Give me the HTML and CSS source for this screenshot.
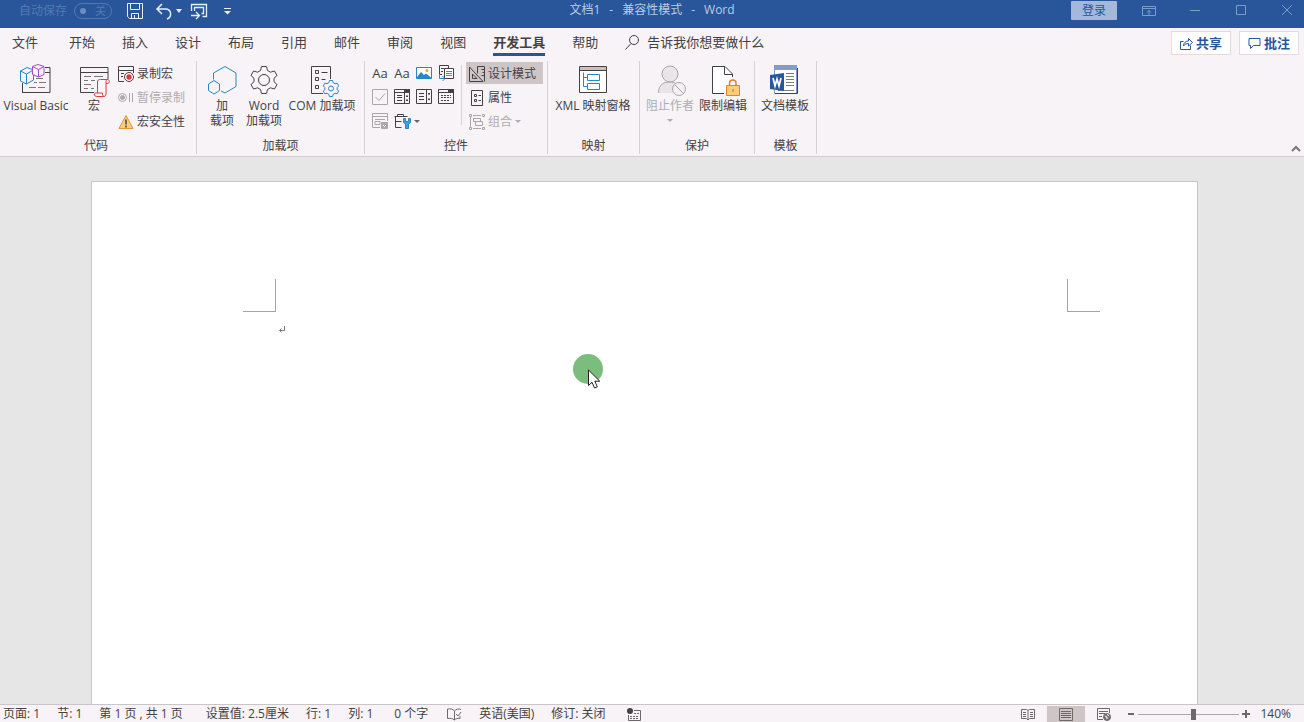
FILE: index.html
```html
<!DOCTYPE html>
<html lang="zh-CN">
<head>
<meta charset="utf-8">
<title>文档1 - 兼容性模式 - Word</title>
<link rel="stylesheet" href="styles.css">
</head>
<body>
<div class="app">
  <header class="titlebar">
    <div class="quick">
      <span class="autosave-label">自动保存</span>
      <button class="toggle" aria-label="自动保存"><i class="knob"></i><span>关</span></button>
      <button class="qbtn save" aria-label="保存"><svg width="18" height="18" viewBox="0 0 18 18"><path d="M1.500 1.500h15v15h-13l-2-2zM4.500 1.500v6h9v-6M5.500 16.500v-5h7v5M8.500 13v3.500"/></svg></button>
      <button class="qbtn undo" aria-label="撤消"><svg width="18" height="18" viewBox="0 0 18 18"><path d="M7 2L2 7l5 5M2 7h8.500c6 0 7 8 1.500 10" stroke-width="1.500"/></svg></button>
      <button class="qbtn drop" aria-label="撤消选项"><svg width="6" height="4" viewBox="0 0 6 4"><path d="M0 0h6L3 4z" class="fill"/></svg></button>
      <button class="qbtn touch" aria-label="切换窗口"><svg width="18" height="18" viewBox="0 0 18 18"><path d="M1.500 9V2.500h15v12h-4M4.500 9V5.500h9v6h-2M1 13.500h8M6 10l3.500 3.500L6 17" stroke-width="1.300"/></svg></button>
      <button class="qbtn more" aria-label="自定义快速访问工具栏"><svg width="7" height="8" viewBox="0 0 7 8"><path d="M0 1.500h7"/><path d="M0 4h7L3.500 7.500z" class="fill"/></svg></button>
    </div>
    <div class="doc-title"><span>文档1</span><span>-</span><span>兼容性模式</span><span>-</span><span>Word</span></div>
    <div class="window-controls">
      <button class="login">登录</button>
      <button class="win" aria-label="功能区显示选项"><svg width="14" height="12" viewBox="0 0 14 12"><path d="M.5 1.500h13v9H.5zM.5 3.500h13M7 10V5.500M5 7.500l2-2 2 2"/></svg></button>
      <button class="win" aria-label="最小化"><svg width="12" height="12" viewBox="0 0 12 12"><path d="M1 5.500h10"/></svg></button>
      <button class="win" aria-label="最大化"><svg width="12" height="12" viewBox="0 0 12 12"><path d="M1.500.5h9v9h-9z"/></svg></button>
      <button class="win" aria-label="关闭"><svg width="12" height="12" viewBox="0 0 12 12"><path d="M1 0l10 10M11 0L1 10"/></svg></button>
    </div>
  </header>

  <nav class="tabs">
    <button class="tab file">文件</button>
    <button class="tab">开始</button>
    <button class="tab">插入</button>
    <button class="tab">设计</button>
    <button class="tab">布局</button>
    <button class="tab">引用</button>
    <button class="tab">邮件</button>
    <button class="tab">审阅</button>
    <button class="tab">视图</button>
    <button class="tab active">开发工具</button>
    <button class="tab">帮助</button>
    <button class="tell"><svg width="15" height="16" viewBox="0 0 15 16"><circle cx="9" cy="6" r="4.500"/><path d="M6 9.500L.5 15.500"/></svg>告诉我你想要做什么</button>
    <div class="actions">
      <button class="action"><svg width="13" height="13" viewBox="0 0 13 13"><path d="M3.500 4.500h-3v8h10v-4M3.500 9c0-3 2-5 5-5V1.500l4 4-4 3.500V6.500c-2 0-3.500.5-5 2.500z"/></svg>共享</button>
      <button class="action"><svg width="13" height="13" viewBox="0 0 13 13"><path d="M1 1.500h11v7H5.500l-3 3v-3H1z"/></svg>批注</button>
    </div>
  </nav>

  <section class="ribbon">
    <div class="group code">
      <div class="tools">
        <button class="big vb"><svg class="ic" viewBox="0 0 34 34"><path d="M26 3.500h5v25H3.500V19M26 8.500h5M3 28.500h28"/><path d="M17 14.500h7M15 18.500h3M20 18.500h7M10 23.500h7M19 23.500h7" class="thin"/><path class="blue cube" d="M1.500 7L8 3.500 14.500 6v10L7.500 20 1.500 17zM1.500 7l6 3 7-4M7.500 10v10"/><path class="purple cube" d="M13.500 2.500L19 .5l6 2v8L19.500 13l-6-2.500zM13.500 2.500l6 3 5.500-3M19.500 5.500V13"/></svg><span>Visual Basic</span></button>
        <button class="big macro"><svg class="ic" viewBox="0 0 34 34"><path d="M31 15V3.500H3.500v25H17M3.500 8.500H31"/><path d="M7 12.500h7M17 12.500h9M7 16.500h4M14 16.500h4M7 20.500h7M7 24.500h4M14 24.500h3" class="thin"/><path class="red" fill="#fdf7f8" d="M20.500 29V18c0-2 1-2.500 3-2.500h7c2.500 0 2.500 4 0 4H29V30c0 1.500-1 2.500-2.500 2.500h-7c-2.500 0-2.500-3.500-1-3.500h7v1.500c0 1 1 2 2 2M29 19.500v-2c0-1 .5-2 1.500-2"/></svg><span>宏</span></button>
        <div class="stack">
          <button class="small"><svg width="16" height="16" viewBox="0 0 16 16"><path d="M6 15.500H.5V.5h15V7M.5 4.500h15M3 7.500h3M3 10.500h2"/><circle cx="11" cy="11" r="4.500" fill="#fff"/><circle cx="11" cy="11" r="2.700" fill="#e0393e" stroke="none"/></svg>录制宏</button>
          <button class="small" disabled><svg width="16" height="16" viewBox="0 0 16 16"><circle cx="4.500" cy="7.500" r="4"/><circle cx="4.500" cy="7.500" r="2" fill="#aaa"/><path d="M11.500 3v9M14.500 3v9"/></svg>暂停录制</button>
          <button class="small"><svg width="16" height="16" viewBox="0 0 16 16"><path d="M8 1.500L15 14.500H1z" fill="#fbcd7a" stroke="#e39339"/><path d="M8 5.500v5M8 11.500v2" stroke-width="1.500"/></svg>宏安全性</button>
        </div>
      </div>
      <div class="caption">代码</div>
    </div>

    <div class="group addins">
      <div class="tools">
        <button class="big a1"><svg class="ic blue" viewBox="0 0 34 34"><path d="M8.500 15.500V9L20 2.500 31 9v13.500L20 29l-4-2"/><path d="M9 16.500l5.500 3.500v6.500L9 30l-5.500-3.500V20z"/></svg><span>加<br>载项</span></button>
        <button class="big a2"><svg class="ic" viewBox="0 0 34 34"><path d="M14.500 2.500h5l1 4 3 1.700 4-1.200 2.500 4.500-3 2.800v3.400l3 2.800-2.500 4.500-4-1.200-3 1.700-1 4h-5l-1-4-3-1.700-4 1.200L4 20.500l3-2.800v-3.400l-3-2.800L6.500 7l4 1.200 3-1.700z"/><circle cx="17" cy="16" r="5.500"/></svg><span>Word<br>加载项</span></button>
        <button class="big a3"><svg class="ic" viewBox="0 0 34 34"><path d="M18 29.500H6.500v-27h19V15M10.500 6.500h3v3h-3zM10.500 13.500h3v3h-3zM10.500 21.500h3v3h-3zM16.500 8.500h6M16.500 15.500h4"/><g class="blue"><path fill="#f7f3f7" d="M24.500 16.500h3l.7 2.200 1.800 1 2.200-.5 1.500 2.700-1.500 1.600v2l1.500 1.600-1.500 2.700-2.200-.5-1.800 1-.7 2.200h-3l-.7-2.200-1.800-1-2.200.5-1.500-2.700 1.500-1.600v-2l-1.500-1.600 1.500-2.700 2.200.5 1.800-1z"/><circle cx="26" cy="24.500" r="2.500"/></g></svg><span>COM 加载项</span></button>
      </div>
      <div class="caption">加载项</div>
    </div>

    <div class="group controls">
      <div class="tools">
        <div class="cells">
          <button class="cell aa">Aa</button>
          <button class="cell aa">Aa</button>
          <button class="cell" aria-label="图片"><svg width="16" height="16" viewBox="0 0 16 16"><path d="M.5 2.500h15v11H.5z" fill="#fff" stroke="#2487c8"/><path d="M1 12l4-5 3 3 2-1.500 5 4V13H1z" fill="#2487c8" stroke="none"/><circle cx="11" cy="5.500" r="1.500" fill="#efa044" stroke="none"/></svg></button>
          <button class="cell" aria-label="构建基块"><svg width="16" height="16" viewBox="0 0 16 16"><path d="M4 9.500H1.500v-9h9V3M3 3.500h3M3 6.500h2"/><path d="M6.500 3.500h9v10h-9z" fill="#fff"/><path d="M8 6.500h6M8 8.500h6M8 10.500h6" stroke="#dc5558"/><path d="M1.500 9v4.500H6M4.500 11l2.500 2.500L4.500 16" class="blue"/></svg></button>
          <button class="cell gray" aria-label="复选框"><svg width="16" height="16" viewBox="0 0 16 16"><path d="M.5.5h15v15H.5zM3.500 8l3.500 3.500L13 4.500"/></svg></button>
          <button class="cell" aria-label="组合框"><svg width="16" height="16" viewBox="0 0 16 16"><path d="M.5.5h15v14H.5zM10.500 1v13M.5 3.500h15M3 6.500h5M3 8.500h5M3 11.500h5"/><path d="M10 0h6v4h-6zM12 6.500h2v1.500h-2zM12 10.500h2v1.500h-2z" class="dark"/></svg></button>
          <button class="cell" aria-label="下拉列表"><svg width="16" height="16" viewBox="0 0 16 16"><path d="M.5.5h15v14H.5zM10.500 1v13M3 4.500h5M3 7.500h5M3 10.500h5"/><path d="M12 4h2v1.500h-2zM12 9.500h2v1.500h-2z" class="dark"/></svg></button>
          <button class="cell" aria-label="日期选取器"><svg width="16" height="16" viewBox="0 0 16 16"><path d="M.5.5h15v14H.5zM.5 3.500h15"/><path d="M10 0h6v4h-6z" class="dark"/><path d="M3 6.500h10M3 8.500h10M3 11.500h8" stroke-dasharray="2 1"/></svg></button>
          <button class="cell gray" aria-label="重复分区"><svg width="16" height="16" viewBox="0 0 16 16"><path d="M8 14.500H.5V.5h15V8M.5 3.500h15M3 6.500h10M3 8.500h5v3H3z"/><path d="M9.500 9.500h6v6h-6z" fill="#aaa"/><path d="M11 12l1.500 1.500L14 12" stroke="#fff"/></svg></button>
          <button class="cell legacy" aria-label="旧式工具"><svg width="18" height="16" viewBox="0 0 18 16"><path d="M3.500 3.500v-2h6v2M.5 3.500h13M1.500 3.500v11h6M1.500 8.500h6"/><path d="M9.500 5.500v4l2 1.500v4.500h3V11l2-1.500v-4h-2v3h-3v-3z" fill="#40a0dc" class="blue"/></svg><i class="caret"></i></button>
        </div>
        <div class="subline"></div>
        <div class="stack modes">
          <button class="small selected"><svg width="16" height="16" viewBox="0 0 16 16"><path d="M.5 1v14.500H14zM3.500 8v4.500H8zM8.500 7.500v-7h7v15M12.500 3.500h3M13.500 6.500h2M12.500 9.500h3"/></svg>设计模式</button>
          <button class="small"><svg width="16" height="16" viewBox="0 0 16 16"><path d="M2.500.5h11v15h-11zM5.500 4.500h2v2h-2zM5.500 9.500h2v2h-2zM9.500 5.500H12M9.500 10.500H12"/></svg>属性</button>
          <button class="small" disabled><svg width="16" height="16" viewBox="0 0 16 16"><path d="M1.500 3v10M4 1.500h8M4 14.500h8M4.500 4.500h7v3h-7zM6.500 7.500h7v4h-7z"/><path d="M.5.5h2v2h-2zM.5 13.500h2v2h-2zM13.500.5h2v2h-2zM13.500 13.500h2v2h-2z"/></svg>组合<i class="caret"></i></button>
        </div>
      </div>
      <div class="caption">控件</div>
    </div>

    <div class="group mapping">
      <div class="tools">
        <button class="big"><svg class="ic" viewBox="0 0 34 34"><path d="M3.500 2.500h27v26h-27z" fill="#fff"/><path d="M4 3h26v3.500H4z" fill="#cbbfc0" stroke="none"/><path d="M3.500 6.500h27"/><path class="blue" d="M11.500 10.500h12v6h-12zM11.500 19.500h12v6h-12zM7.500 8.500v14h4M7.500 13.500h4"/></svg><span>XML 映射窗格</span></button>
      </div>
      <div class="caption">映射</div>
    </div>

    <div class="group protect">
      <div class="tools">
        <button class="big" disabled><svg class="ic" viewBox="0 0 34 34"><path fill="#e9e6e9" d="M5.500 29c0-12 14-14 19-8l-5 8z" stroke="none"/><circle cx="17" cy="10" r="8" fill="#e9e6e9"/><path d="M5.500 29c0-9 6-11 11-11 3 0 5 .5 7 2"/><circle cx="26" cy="25" r="6.500" fill="#f3f0f3"/><path d="M21.500 20.500l9 9"/></svg><span>阻止作者</span><i class="caret"></i></button>
        <button class="big restrict"><svg class="ic" viewBox="0 0 34 34"><path fill="#fff" d="M18 29.500H6.500v-27H19l7.500 7.500v19H18z" stroke="none"/><path d="M18 29.500H6.500v-27H19l7.500 7.500v3M18.500 2.500v8h8"/><path d="M23.500 22v-3c0-4 6.500-4 6.500 0v3" stroke="#df822b" fill="none" stroke-width="1.500"/><path d="M20.500 21.500h13v10h-13z" fill="#fdcd79" stroke="#df822b"/><path d="M27 25v3" stroke="#b56d24"/></svg><span>限制编辑</span></button>
      </div>
      <div class="caption">保护</div>
    </div>

    <div class="group template">
      <div class="tools">
        <button class="big"><svg class="ic" viewBox="0 0 34 34"><path d="M6.500 1.500h22v28h-22z" fill="#fff" stroke="#7b98c4"/><path d="M6 1h23v5H6z" fill="#7f9fc9" stroke="none"/><path d="M7 29.500h22.500V4"/><path d="M18 9.500h8M18 12.500h8M18 15.500h8M18 18.500h8M18 21.500h8M10 26.500h16" class="thin"/><path d="M2 11l14-2v18L2 25z" fill="#2a579a" stroke="none"/><path d="M5 14l2 8 2-7 2 7 2-8" stroke="#fff" stroke-width="1.700"/></svg><span>文档模板</span></button>
      </div>
      <div class="caption">模板</div>
    </div>
    <button class="collapse" aria-label="折叠功能区"><svg width="10" height="7" viewBox="0 0 10 7"><path d="M1 6l4-4 4 4"/></svg></button>
  </section>

  <main class="workspace">
    <article class="page">
      <div class="margins"><i class="corner left"></i><i class="corner right"></i></div>
      <p class="para"><svg width="8" height="8" viewBox="0 0 8 8"><path d="M6.500 0v4.500H2M3.500 2.500l-2 2 2 2"/></svg></p>
    </article>
    <div class="pointer"><svg width="32" height="36" viewBox="0 0 32 36"><circle cx="15" cy="15" r="15" fill="#7abd7c" stroke="none"/><path d="M15.500 16v15.500l3.500-3.200 2.500 5.700 2.800-1.200-2.500-5.600h5z" fill="#fff" stroke="#222"/></svg></div>
  </main>

  <footer class="status">
    <span>页面: 1</span><span>节: 1</span><span class="pages">第 1 页 , 共 1 页</span><span>设置值: 2.5厘米</span><span>行: 1</span><span>列: 1</span><span class="words">0 个字</span>
    <svg width="15" height="13" viewBox="0 0 15 13"><path d="M7.500 12V3C6 1 3 .5.500 1v9.500c3-.5 5 0 7 1.500 1.500-1.500 3-2 5.500-1.500V8M7.500 3C9 1 12 .5 14 1.500M9 6l2 2 3-4"/></svg>
    <span>英语(美国)</span><span>修订: 关闭</span>
    <svg class="rec" width="14" height="13" viewBox="0 0 14 13"><path d="M3 8.500h9M3 10.500h9M7 5.500h5" stroke-dasharray="2 1"/><path d="M7 2.500h6.500v10h-12V7"/><circle cx="3" cy="3" r="3" class="dark"/></svg>
    <div class="views">
      <button aria-label="阅读视图"><svg width="14" height="13" viewBox="0 0 14 13"><path d="M7 12L5.500 10.500h-5v-9h5L7 2.500l1.500-1h5v9h-5zM7 2.500V12M2 4.500h3M2 6.500h3M2 8.500h3M9 4.500h3M9 6.500h3M9 8.500h3"/></svg></button>
      <button class="on" aria-label="页面视图"><svg width="14" height="13" viewBox="0 0 14 13"><path d="M.5.5h13v12H.5zM2 3.500h10M2 5.500h10M2 7.500h10M2 9.500h10"/></svg></button>
      <button aria-label="Web 版式视图"><svg width="14" height="13" viewBox="0 0 14 13"><path d="M6 11.500H.5V.5h12V5M2 3.500h9M2 5.500h6M2 8.500h3"/><circle cx="10" cy="9" r="3.500" fill="#777"/><path d="M8 8l2 1v2M10 6l2 2" stroke="#fff"/></svg></button>
    </div>
    <div class="zoom">
      <button aria-label="缩小"><svg width="8" height="8" viewBox="0 0 8 8"><path d="M1 4h6" stroke-width="2"/></svg></button>
      <input type="range" min="0" max="100" value="55" aria-label="缩放">
      <button aria-label="放大"><svg width="8" height="8" viewBox="0 0 8 8"><path d="M0 4h8M4 0v8" stroke-width="2"/></svg></button>
      <span>140%</span>
    </div>
  </footer>
</div>
</body>
</html>
```
FILE: styles.css
```css
* { box-sizing: border-box; }
body {
  margin: 0;
  font: 12px/16px "Open Sans", "Noto Sans CJK SC", sans-serif;
  color: #444143;
}
button {
  font: inherit;
  color: inherit;
  background: none;
  border: 0;
  padding: 0;
  margin: 0;
  white-space: nowrap;
}
svg { display: block; flex: none; fill: none; stroke: #444143; }
.app { height: 100vh; display: flex; flex-direction: column; overflow: hidden; }

.titlebar {
  height: 28px;
  flex: none;
  display: grid;
  grid-template-columns: 1fr auto 1fr;
  align-items: start;
  padding-top: 1px;
  background: #29569b;
  color: #b9cbe4;
}
.titlebar svg { stroke: #e6f0fb; }
.titlebar .fill { fill: #e6f0fb; stroke: none; }
.quick { display: flex; align-items: center; height: 20px; padding-left: 19px; }
.autosave-label { color: #5379b1; margin-right: 7px; }
.toggle {
  display: flex;
  align-items: center;
  justify-content: space-between;
  width: 38px;
  height: 16px;
  padding: 0 5px;
  border: 1px solid #5379b1;
  border-radius: 8px;
  color: #5379b1;
  font-size: 11px;
}
.knob { width: 6px; height: 6px; border-radius: 3px; background: #6a8dc0; }
.save { margin-left: 14px; }
.undo { margin-left: 11px; }
.drop { margin-left: 3px; }
.touch { margin-left: 8px; }
.more { margin-left: 16px; }
.doc-title { display: flex; gap: 9px; line-height: 18px; }
.window-controls { display: flex; justify-content: flex-end; align-items: center; height: 19px; }
.login { width: 46px; height: 19px; margin-right: 9px; background: #a4b9da; color: #29569b; border-radius: 1px; }
.win { width: 46px; display: flex; justify-content: center; }
.win:last-child { width: 40px; padding-left: 6px; }
.win svg { stroke: #7d9cc9; }

.tabs {
  height: 30px;
  flex: none;
  display: flex;
  align-items: flex-start;
  gap: 27px;
  padding: 4px 5px 0 12px;
  background: #f7f3f7;
  font-size: 13px;
}
.tab { display: flex; height: 24px; line-height: 20px; }
.file { margin-right: 4px; }
.active { font-weight: bold; border-bottom: 3px solid #29569b; }
.tell { display: flex; align-items: center; gap: 7px; height: 20px; }
.actions { display: flex; gap: 8px; margin: -1px 0 0 auto; }
.action {
  display: flex;
  align-items: center;
  justify-content: center;
  gap: 3px;
  width: 60px;
  height: 24px;
  background: #fff;
  border: 1px solid #ead9dc;
  color: #29569b;
  font-weight: bold;
}
.action svg { stroke: #29569b; }

.ribbon {
  flex: none;
  display: flex;
  padding: 3px 0 2px;
  background: #f7f3f7;
  border-bottom: 1px solid #d1cdd1;
}
.group { display: flex; flex-direction: column; border-right: 1px solid #d5d1d5; }
.tools { display: flex; height: 77px; }
.caption { text-align: center; }
.big {
  display: flex;
  flex-direction: column;
  align-items: center;
  padding-top: 3px;
  line-height: 15px;
}
.ic { width: 34px; height: 34px; }
.thin { opacity: .7; }
.blue, .blue path, .blue circle { stroke: #2487c8; }
.purple { stroke: #a44cc0; }
.red { stroke: #e0393e; }
.cube { fill: #f7f3f7; }
.dark { fill: #444143; stroke: none; }
button:disabled { color: #b0adaf; }
button:disabled svg, .gray svg { stroke: #aaa6a9; }
.caret { width: 0; height: 0; border: 3px solid transparent; border-top-color: #666; border-bottom: 0; }
button:disabled .caret { border-top-color: #b0adaf; margin-top: 6px; }
.stack { display: flex; flex-direction: column; }
.small { display: flex; align-items: center; gap: 3px; height: 24px; padding: 1px 4px 0 3px; }
button.small:disabled .caret { margin-top: 0; }

.vb { width: 72px; }
.macro { width: 36px; margin: 0 3px 0 4px; }
.code .tools { padding-right: 7px; }
.code .caption { padding-right: 4px; }
.addins .tools { padding: 0 6px 0 5px; }
.a1 { width: 40px; }
.a2 { width: 44px; }
.a3 { width: 72px; }
.controls .tools { padding: 0 4px; }
.cells { display: grid; grid-template-columns: repeat(4, 22px); grid-auto-rows: 24px; }
.cell { display: flex; align-items: center; justify-content: center; }
.aa { font-size: 13px; }
.legacy { grid-column: span 2; justify-content: flex-start; gap: 2px; padding-left: 3px; }
.subline { width: 1px; height: 60px; margin: 4px 4px 0; background: #d5d1d5; }
.modes { width: 77px; }
.selected { background: #cec6c6; height: 22px; margin: 1px 0; }
.mapping .big { width: 80px; margin: 0 6px 0 5px; }
.protect .big { width: 52px; margin-left: 4px; }
.protect .restrict { width: 54px; margin: 0 4px 0 0; }
.template .big { width: 50px; margin: 0 6px 0 5px; }
.collapse { margin: auto 3px 2px auto; }
.collapse svg { stroke: #777; stroke-width: 2; }

.workspace {
  position: relative;
  flex: 1;
  min-height: 0;
  display: flex;
  padding: 24px 106px 0 91px;
  background: #e6e6e6;
}
.page { flex: 1; padding-top: 97px; background: #fff; border: 1px solid #c8c8c8; border-bottom: 0; }
.margins { display: flex; justify-content: space-between; padding: 0 97px 0 151px; }
.corner { width: 33px; height: 33px; border: 0 solid #a5a5a5; border-bottom-width: 1px; }
.left { border-right-width: 1px; }
.right { border-left-width: 1px; }
.para { margin: 14px 0 0 186px; }
.para svg { stroke: #777; }
.pointer { position: absolute; left: 573px; top: 197px; }

.status {
  flex: none;
  display: flex;
  align-items: center;
  gap: 17px;
  height: 18px;
  padding: 1px 0 0 3px;
  white-space: nowrap;
  background: #f7f3f7;
  border-top: 1px solid #c9c5c9;
}
.status svg { stroke: #6c696b; }
.pages { margin-right: 6px; }
.words { margin: 0 2px 0 4px; }
.rec { margin-left: 4px; }
.views { display: flex; margin-left: auto; align-self: stretch; }
.views button { width: 38px; display: flex; align-items: center; justify-content: center; }
.on { background: #cec6c6; }
.zoom { display: flex; align-items: center; gap: 3px; margin-left: -13px; padding-right: 13px; }
.zoom span { margin-left: 7px; }
.zoom input { appearance: none; width: 101px; height: 12px; margin: 0; background: linear-gradient(#aaa6a9, #aaa6a9) center / 100% 1px no-repeat; }
.zoom input::-webkit-slider-thumb { appearance: none; width: 5px; height: 11px; background: #6c696b; }
```
